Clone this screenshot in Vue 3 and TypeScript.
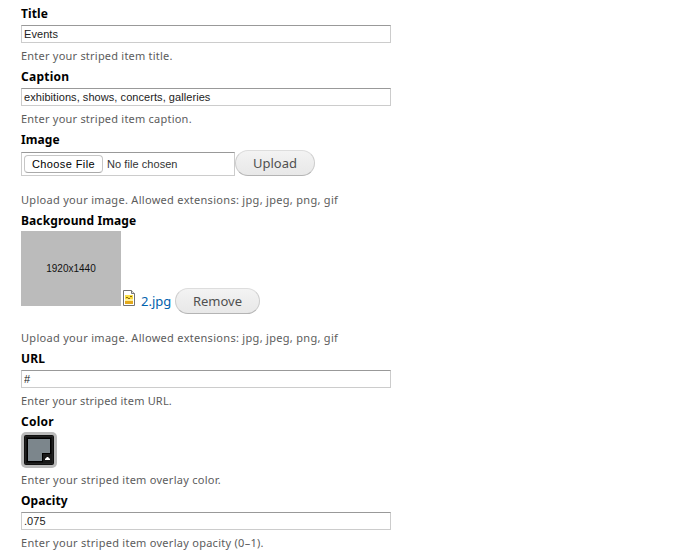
<script setup lang="ts">
import { ref } from 'vue'

const title = ref('Events')
const caption = ref('exhibitions, shows, concerts, galleries')
const url = ref('#')
const opacity = ref('.075')
</script>

<template>
  <form class="form" @submit.prevent>
    <div class="field">
      <label class="label" for="title">Title</label>
      <input id="title" v-model="title" class="text" type="text" />
      <p class="desc">Enter your striped item title.</p>
    </div>

    <div class="field">
      <label class="label l-caption" for="caption">Caption</label>
      <input id="caption" v-model="caption" class="text" type="text" />
      <p class="desc">Enter your striped item caption.</p>
    </div>

    <div class="field upload-field">
      <span class="label">Image</span>
      <div class="upload-row">
        <div class="file">
          <button type="button" class="choose">Choose File</button>
          <span class="none">No file chosen</span>
        </div>
        <button type="button" class="pill upload">Upload</button>
      </div>
      <p class="desc d-upload">Upload your image. Allowed extensions: jpg, jpeg, png, gif</p>
    </div>

    <div class="field">
      <span class="label">Background Image</span>
      <div class="preview-row">
        <div class="thumb">1920x1440</div>
        <svg class="file-icon" width="12" height="16" viewBox="0 0 12 16">
          <path d="M.5.5h8l3 3v12H.5z" fill="#fff" stroke="#737373" />
          <path d="M8.5.5v3h3" fill="#ddd" stroke="#777" />
          <path d="M2 5h8v9H2z" fill="#f8d93c" />
          <path d="M2 5h8v2H2z" fill="#fbe04a" />
          <path d="M2 9h8v2H2z" fill="#fff09a" />
          <path d="M2 11h8v3H2z" fill="#e3a91c" />
          <path d="M3 7.5h2M7 6.5h2M5 8.5h2" fill="none" stroke="#8a6a14" />
        </svg>
        <a class="link" href="#" @click.prevent>2.jpg</a>
        <button type="button" class="pill remove">Remove</button>
      </div>
      <p class="desc d-upload">Upload your image. Allowed extensions: jpg, jpeg, png, gif</p>
    </div>

    <div class="field">
      <label class="label" for="url">URL</label>
      <input id="url" v-model="url" class="text" type="text" />
      <p class="desc d-url">Enter your striped item URL.</p>
    </div>

    <div class="field">
      <span class="label l-caption">Color</span>
      <svg class="swatch" width="36" height="36" viewBox="0 0 36 36">
        <rect width="36" height="36" rx="5" fill="#bbb" />
        <rect x="3" y="3" width="30" height="30" rx="2" fill="#111" />
        <rect x="4.5" y="4.5" width="27" height="27" fill="none" stroke="#222" />
        <path d="M6 6h24v24H6z" fill="#000" />
        <path d="M7 7h22v14h-8v8H7z" fill="#7c868c" />
        <path d="M22 22h9v9h-9z" fill="#191919" />
        <path d="M24 28v-1l2-2h1l2 2v1z" fill="#fff" />
      </svg>
      <p class="desc d-overlay">Enter your striped item overlay color.</p>
    </div>

    <div class="field">
      <label class="label" for="opacity">Opacity</label>
      <input id="opacity" v-model="opacity" class="text" type="text" />
      <p class="desc d-overlay">Enter your striped item overlay opacity (0–1).</p>
    </div>
  </form>
</template>

<style>
body {
  margin: 0;
  background: #fff;
  overflow: hidden;
}
</style>

<style scoped>
.form {
  box-sizing: border-box;
  height: 555px;
  overflow: hidden;
  padding: 5px 0 0 21px;
  font-family: "Noto Sans", "Open Sans", sans-serif;
}
.field {
  display: flex;
  flex-direction: column;
  align-items: flex-start;
  margin-bottom: 3px;
}
.label {
  height: 18px;
  margin-bottom: 2px;
  font-size: 12px;
  line-height: 18px;
  font-weight: 700;
  letter-spacing: 0.1px;
  color: #000;
  white-space: nowrap;
}
.l-caption {
  letter-spacing: 0.25px;
}
.text {
  box-sizing: border-box;
  width: 370px;
  height: 18px;
  padding: 0 2px;
  border: 1px solid #ccc;
  border-top-color: #999;
  border-radius: 0;
  outline: 0;
  background: #fff;
  font: 11px/14px "Liberation Sans", Arial, sans-serif;
  letter-spacing: 0.06px;
  color: #222;
}
.desc {
  height: 18px;
  margin: 4px 0 0;
  font-size: 11px;
  line-height: 18px;
  letter-spacing: 0.22px;
  color: #5c5c5c;
  white-space: nowrap;
}
.d-upload {
  letter-spacing: 0.3px;
}
.d-url {
  letter-spacing: 0.18px;
}
.d-overlay {
  letter-spacing: 0.27px;
}
.upload-row {
  display: flex;
  height: 26px;
  margin-top: -1px;
  align-items: flex-end;
}
.file {
  box-sizing: border-box;
  display: flex;
  align-items: center;
  width: 214px;
  height: 24px;
  padding: 0 2px;
  border: 1px solid #ccc;
  border-top-color: #999;
  font: 11px/14px "Liberation Sans", Arial, sans-serif;
  letter-spacing: 0.06px;
  color: #333;
}
.choose {
  box-sizing: border-box;
  width: 79px;
  height: 18px;
  margin-right: 4px;
  padding: 0;
  border: 1px solid #c6c6c6;
  border-bottom-color: #aaa;
  border-radius: 4px;
  background: #fff;
  font: 11px/14px "Liberation Sans", Arial, sans-serif;
  letter-spacing: 0.4px;
  color: #000;
}
.pill {
  box-sizing: border-box;
  height: 26px;
  padding: 0;
  border: 1px solid #ccc;
  border-top-color: #ddd;
  border-bottom-color: #b4b4b4;
  border-radius: 13px;
  background: linear-gradient(#f3f3f3, #e8e8e8);
  font: 13px/22px "Noto Sans", "Open Sans", sans-serif;
  color: #505050;
}
.upload {
  width: 80px;
}
.remove {
  width: 85px;
  margin: 57px 0 0 4px;
}
.upload-field .desc {
  margin-top: 15px;
}
.preview-row {
  display: flex;
  align-items: flex-start;
  height: 83px;
  margin-top: -1px;
}
.preview-row + .desc {
  margin-top: 15px;
}
.thumb {
  width: 100px;
  height: 75px;
  background: #bbb;
  font: 10px/75px "Liberation Sans", Arial, sans-serif;
  text-align: center;
  color: #111;
}
.file-icon {
  margin: 59px 0 0 2px;
}
.link {
  width: 30px;
  margin: 61px 0 0 6px;
  font-size: 13px;
  line-height: 18px;
  color: #0062ad;
  text-decoration: none;
  white-space: nowrap;
}
.swatch {
  display: block;
  margin-top: -1px;
}
.swatch + .desc {
  margin-top: 3px;
}
</style>
